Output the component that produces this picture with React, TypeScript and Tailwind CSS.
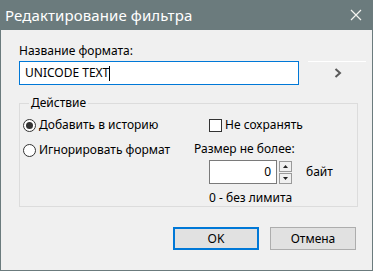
import React from 'react';

const font = { fontFamily: '"Noto Sans", "Liberation Sans", sans-serif' };

const Radio: React.FC<{ checked?: boolean; label: string }> = ({ checked, label }) => (
    <label className="flex items-center gap-[3px] h-[16px]">
        <span className="w-[13px] h-[13px] rounded-full border border-[#333] bg-white flex items-center justify-center">
            {checked && <span className="w-[7px] h-[7px] rounded-full bg-[#333]" />}
        </span>
        <span>{label}</span>
    </label>
);

export default function App() {
    return (
        <div
            className="w-[373px] h-[271px] flex flex-col border border-t-0 border-[#6b7b7d] bg-[#f0f0f0] text-[12px] text-black leading-[16px] overflow-hidden"
            style={font}
        >
            {/* title bar */}
            <div className="h-[30px] bg-[#6b7b7d] flex items-center justify-between pl-[5px] pr-[8px] -mx-px">
                <span className="text-white text-[15px] tracking-[0.1px]">Редактирование фильтра</span>
                <svg width="12" height="12" viewBox="0 0 12 12" className="mr-[3px]">
                    <path d="M1 1 L11 11 M11 1 L1 11" stroke="#f4f4f0" strokeWidth="1.2" />
                </svg>
            </div>

            <div className="flex-1 pl-[18px] pr-[6px] pt-[13px]">
                <div>Название формата:</div>
                <div className="flex items-start mt-[2px]">
                    <div className="w-[280px] shrink-0 h-[24px] border border-[#0078d7] bg-white flex items-center pl-[5px]">
                        <span>UNICODE TEXT</span>
                        <span className="w-px h-[15px] bg-black" />
                    </div>
                    <div className="ml-[9px] w-[58px] shrink-0 flex flex-col items-center">
                        <div className="w-full h-px bg-white" />
                        <svg width="8" height="10" viewBox="0 0 8 10" className="mt-[6px] ml-[2px]">
                            <path d="M1.5 1 L6 5 L1.5 9" stroke="#5a5a5a" strokeWidth="2" fill="none" />
                        </svg>
                    </div>
                </div>

                <fieldset className="mt-[10px] w-[339px] h-[112px] border border-[#dcdcdc] pl-[3px] pr-[6px]">
                    <legend className="ml-[6px] px-[2px]">Действие</legend>
                    <div className="flex mt-[6px]">
                        <div className="w-[171px] flex flex-col gap-[9px]">
                            <Radio checked label="Добавить в историю" />
                            <Radio label="Игнорировать формат" />
                        </div>
                        <div className="flex flex-col">
                            <label className="flex items-center gap-[3px] h-[16px] ml-[15px]">
                                <span className="w-[13px] h-[13px] border border-[#333] bg-white" />
                                <span>Не сохранять</span>
                            </label>
                            <div className="mt-[8px]">Размер не более:</div>
                            <div className="flex items-center ml-[15px] mt-[3px]">
                                <div className="w-[68px] h-[24px] border border-[#7a7a7a] bg-white flex items-center justify-end pr-[5px]">
                                    0
                                </div>
                                <div className="ml-[2px] flex flex-col gap-px">
                                    <div className="w-[13px] h-[11px] border border-[#9a9a9a] bg-[#f0f0f0] flex items-center justify-center">
                                        <svg width="5" height="3" viewBox="0 0 5 3"><path d="M2.5 0 L5 3 L0 3 Z" fill="#222" /></svg>
                                    </div>
                                    <div className="w-[13px] h-[11px] border border-[#9a9a9a] bg-[#f0f0f0] flex items-center justify-center">
                                        <svg width="5" height="3" viewBox="0 0 5 3"><path d="M0 0 L5 0 L2.5 3 Z" fill="#222" /></svg>
                                    </div>
                                </div>
                                <span className="ml-[14px]">байт</span>
                            </div>
                            <div className="ml-[15px] mt-[6px]">0 - без лимита</div>
                        </div>
                    </div>
                </fieldset>

                <div className="flex justify-end gap-[11px] mt-[20px] pr-[10px]">
                    <button className="w-[86px] h-[23px] border-2 border-[#0078d7] bg-[#e1e1e1] flex items-center justify-center">
                        OK
                    </button>
                    <button className="w-[86px] h-[23px] border border-[#adadad] bg-[#e1e1e1] flex items-center justify-center">
                        Отмена
                    </button>
                </div>
            </div>
        </div>
    );
}
